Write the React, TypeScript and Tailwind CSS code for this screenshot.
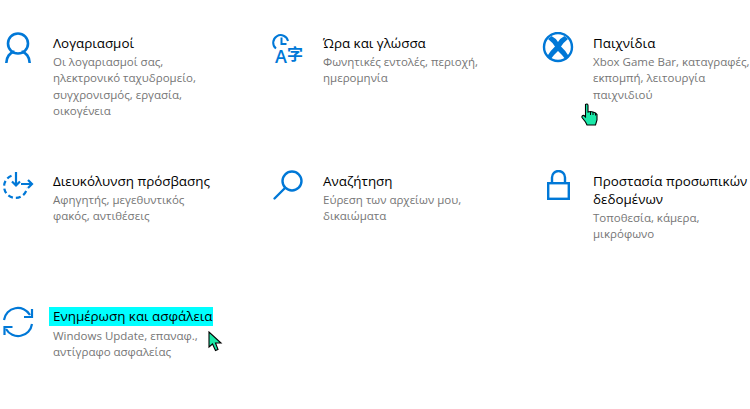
const items = [
  { title: 'Λογαριασμοί', desc: 'Οι λογαριασμοί σας, ηλεκτρονικό ταχυδρομείο, συγχρονισμός, εργασία, οικογένεια', icon: <UserIcon /> },
  { title: 'Ώρα και γλώσσα', desc: 'Φωνητικές εντολές, περιοχή, ημερομηνία', icon: <LangIcon /> },
  { title: 'Παιχνίδια', desc: 'Xbox Game Bar, καταγραφές, εκπομπή, λειτουργία παιχνιδιού', icon: <XboxIcon /> },
  { title: 'Διευκόλυνση πρόσβασης', desc: 'Αφηγητής, μεγεθυντικός φακός, αντιθέσεις', icon: <AccessIcon /> },
  { title: 'Αναζήτηση', desc: 'Εύρεση των αρχείων μου, δικαιώματα', icon: <SearchIcon /> },
  { title: 'Προστασία προσωπικών δεδομένων', desc: 'Τοποθεσία, κάμερα, μικρόφωνο', icon: <LockIcon /> },
  { title: 'Ενημέρωση και ασφάλεια', desc: 'Windows Update, επαναφ., αντίγραφο ασφαλείας', icon: <SyncIcon />, highlight: true },
]

function UserIcon() {
  return (
    <svg width="36" height="36" viewBox="0 0 36 36" fill="none" stroke="#0078d7" strokeWidth="2.6">
      <circle cx="17" cy="11.5" r="10" />
      <path d="M5.3 31C5.3 25 9 20.5 13.5 19.5M28.7 31C28.7 25 25 20.5 20.5 19.5" />
    </svg>
  )
}

function LangIcon() {
  return (
    <svg width="36" height="36" viewBox="0 0 36 36" fill="none" stroke="#0078d7" strokeWidth="2">
      <path d="M5 16.5A7.5 7.5 0 1 1 17 9" />
      <path d="M10.5 5.5V12H15.5" />
      <text x="4" y="31" fontSize="18" fontWeight="600" fill="#0078d7" stroke="none" fontFamily="'Open Sans', sans-serif">A</text>
      <text x="16" y="28" fontSize="16" fontWeight="700" fill="#0078d7" stroke="none" fontFamily="'Noto Sans CJK SC', sans-serif">字</text>
    </svg>
  )
}

function XboxIcon() {
  return (
    <svg width="36" height="36" viewBox="0 0 36 36" fill="none">
      <circle cx="17" cy="15" r="14" stroke="#0078d7" strokeWidth="2.4" />
      <path d="M10.5 4Q14.5 6 17 10Q19.5 6 23.5 4L27 7Q22.5 10.5 20 14.5Q25 19 28 24.5L24.5 27.5Q21 22.5 17 19Q13 22.5 9.5 27.5L6 24.5Q9 19 14 14.5Q11.5 10.5 7 7Z" fill="#0078d7" />
    </svg>
  )
}

function AccessIcon() {
  return (
    <svg width="36" height="36" viewBox="0 0 36 36" fill="none" stroke="#0078d7" strokeWidth="2.2">
      <path d="M10.5 5.7A11.5 11.5 0 1 0 26 18" strokeDasharray="5 3" />
      <path d="M15 2V15.5M11 11.5L15 15.5L19 11.5" />
      <path d="M20 14H31M27 10L31 14L27 18" />
    </svg>
  )
}

function SearchIcon() {
  return (
    <svg width="36" height="36" viewBox="0 0 36 36" fill="none" stroke="#0078d7" strokeWidth="2.4">
      <circle cx="21" cy="11" r="9.5" />
      <path d="M14 18L3.5 28.5" strokeLinecap="round" />
    </svg>
  )
}

function LockIcon() {
  return (
    <svg width="36" height="36" viewBox="0 0 36 36" fill="none" stroke="#0078d7" strokeWidth="2.4">
      <rect x="7.2" y="13.2" width="20.6" height="15.6" />
      <path d="M11 13V7.5A6.5 6.5 0 0 1 24 7.5V13" />
    </svg>
  )
}

function SyncIcon() {
  return (
    <svg width="36" height="36" viewBox="0 0 36 36" fill="none" stroke="#0078d7" strokeWidth="2.2">
      <path d="M3 15A14 14 0 0 1 29 10" />
      <path d="M31 19A14 14 0 0 1 5 24" />
      <path d="M31 4V12H23" />
      <path d="M3.5 30V22H11.5" />
    </svg>
  )
}

function HandCursor() {
  return (
    <svg width="18" height="24" viewBox="0 0 18 24" className="absolute left-[581px] top-[103px]">
      <path d="M4.5 1.5C5.5.5 7 1 7 2.5V9L9.5 8.5L12 9L14.5 10L16 11.5V17L14.5 22H6L4.5 19L1 14.5C.5 13 2 12 3 12.5L4.5 14Z" fill="#1ae8a8" stroke="#000" strokeWidth="1.1" />
      <path d="M9.5 8.5V12M12 9V12M14.5 10V12.5" stroke="#000" strokeWidth="1" fill="none" />
    </svg>
  )
}

function ArrowCursor() {
  return (
    <svg width="16" height="22" viewBox="0 0 16 22" className="absolute left-[208px] top-[331px]">
      <path d="M1 1V16L4.5 13L7.5 19.5L10 18.5L7.5 12H13Z" fill="#1ae8a8" stroke="#000" strokeWidth="1.1" />
    </svg>
  )
}

export default function App() {
  return (
    <div className="relative w-[750px] h-[409px] bg-white overflow-hidden font-['Open_Sans',sans-serif]">
      <div className="grid grid-cols-[270px_270px_270px] grid-rows-[138px_135px_136px]">
        {items.map(item => (
          <div key={item.title} className="flex pl-[1px] pt-[32px]">
            <div className="w-[52px] shrink-0">{item.icon}</div>
            <div className="w-[158px] shrink-0 pt-[2px]">
              <div className="text-[13.4px] leading-[18px] text-black">
                {item.highlight ? (
                  <span className="inline-block whitespace-nowrap bg-[#00ffff] leading-[19px] pl-[4px] -ml-[4px] -mr-[4px]">{item.title}</span>
                ) : (
                  item.title
                )}
              </div>
              <div className="mt-[2px] text-[11.5px] leading-[16.4px] text-[#767676]">{item.desc}</div>
            </div>
          </div>
        ))}
      </div>
      <HandCursor />
      <ArrowCursor />
    </div>
  )
}
